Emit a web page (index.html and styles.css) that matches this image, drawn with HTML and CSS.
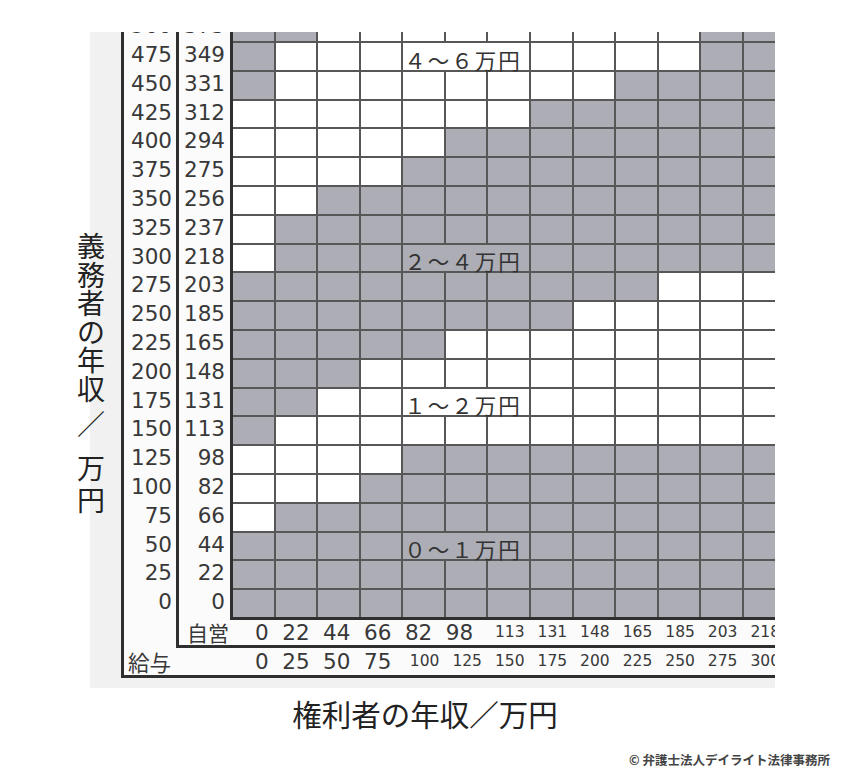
FILE: index.html
```html
<!DOCTYPE html>
<html lang="ja">
<head>
<meta charset="utf-8">
<title>算定表</title>
<link rel="stylesheet" href="styles.css">
</head>
<body>
<div class="page">
  <div class="ylabel"><span class="yl-a">義務者の年収</span><span class="yl-b">／</span><span class="yl-c">万円</span></div>
  <div class="figure">
    <div class="frame">
      <div class="top">
        <div class="lab sal"><span>500</span><span>475</span><span>450</span><span>425</span><span>400</span><span>375</span><span>350</span><span>325</span><span>300</span><span>275</span><span>250</span><span>225</span><span>200</span><span>175</span><span>150</span><span>125</span><span>100</span><span>75</span><span>50</span><span>25</span><span>0</span></div>
        <div class="inner">
          <div class="inner-top">
            <div class="lab se"><span>373</span><span>349</span><span>331</span><span>312</span><span>294</span><span>275</span><span>256</span><span>237</span><span>218</span><span>203</span><span>185</span><span>165</span><span>148</span><span>131</span><span>113</span><span>98</span><span>82</span><span>66</span><span>44</span><span>22</span><span>0</span></div>
            <div class="grid">
<i class="g"></i><i class="g"></i><i></i><i></i><i></i><i></i><i></i><i></i><i></i><i></i><i></i><i class="g"></i><i class="g"></i>
<i class="g"></i><i></i><i></i><i></i><b class="band">４～６万円</b><i></i><i></i><i></i><i></i><i class="g"></i><i class="g"></i>
<i class="g"></i><i></i><i></i><i></i><i></i><i></i><i></i><i></i><i></i><i class="g"></i><i class="g"></i><i class="g"></i><i class="g"></i>
<i></i><i></i><i></i><i></i><i></i><i></i><i></i><i class="g"></i><i class="g"></i><i class="g"></i><i class="g"></i><i class="g"></i><i class="g"></i>
<i></i><i></i><i></i><i></i><i></i><i class="g"></i><i class="g"></i><i class="g"></i><i class="g"></i><i class="g"></i><i class="g"></i><i class="g"></i><i class="g"></i>
<i></i><i></i><i></i><i></i><i class="g"></i><i class="g"></i><i class="g"></i><i class="g"></i><i class="g"></i><i class="g"></i><i class="g"></i><i class="g"></i><i class="g"></i>
<i></i><i></i><i class="g"></i><i class="g"></i><i class="g"></i><i class="g"></i><i class="g"></i><i class="g"></i><i class="g"></i><i class="g"></i><i class="g"></i><i class="g"></i><i class="g"></i>
<i></i><i class="g"></i><i class="g"></i><i class="g"></i><i class="g"></i><i class="g"></i><i class="g"></i><i class="g"></i><i class="g"></i><i class="g"></i><i class="g"></i><i class="g"></i><i class="g"></i>
<i></i><i class="g"></i><i class="g"></i><i class="g"></i><b class="band g">２～４万円</b><i class="g"></i><i class="g"></i><i class="g"></i><i class="g"></i><i class="g"></i><i class="g"></i>
<i class="g"></i><i class="g"></i><i class="g"></i><i class="g"></i><i class="g"></i><i class="g"></i><i class="g"></i><i class="g"></i><i class="g"></i><i class="g"></i><i></i><i></i><i></i>
<i class="g"></i><i class="g"></i><i class="g"></i><i class="g"></i><i class="g"></i><i class="g"></i><i class="g"></i><i class="g"></i><i></i><i></i><i></i><i></i><i></i>
<i class="g"></i><i class="g"></i><i class="g"></i><i class="g"></i><i class="g"></i><i></i><i></i><i></i><i></i><i></i><i></i><i></i><i></i>
<i class="g"></i><i class="g"></i><i class="g"></i><i></i><i></i><i></i><i></i><i></i><i></i><i></i><i></i><i></i><i></i>
<i class="g"></i><i class="g"></i><i></i><i></i><b class="band">１～２万円</b><i></i><i></i><i></i><i></i><i></i><i></i>
<i class="g"></i><i></i><i></i><i></i><i></i><i></i><i></i><i></i><i></i><i></i><i></i><i></i><i></i>
<i></i><i></i><i></i><i></i><i class="g"></i><i class="g"></i><i class="g"></i><i class="g"></i><i class="g"></i><i class="g"></i><i class="g"></i><i class="g"></i><i class="g"></i>
<i></i><i></i><i></i><i class="g"></i><i class="g"></i><i class="g"></i><i class="g"></i><i class="g"></i><i class="g"></i><i class="g"></i><i class="g"></i><i class="g"></i><i class="g"></i>
<i></i><i class="g"></i><i class="g"></i><i class="g"></i><i class="g"></i><i class="g"></i><i class="g"></i><i class="g"></i><i class="g"></i><i class="g"></i><i class="g"></i><i class="g"></i><i class="g"></i>
<i class="g"></i><i class="g"></i><i class="g"></i><i class="g"></i><b class="band g">０～１万円</b><i class="g"></i><i class="g"></i><i class="g"></i><i class="g"></i><i class="g"></i><i class="g"></i>
<i class="g"></i><i class="g"></i><i class="g"></i><i class="g"></i><i class="g"></i><i class="g"></i><i class="g"></i><i class="g"></i><i class="g"></i><i class="g"></i><i class="g"></i><i class="g"></i><i class="g"></i>
<i class="g"></i><i class="g"></i><i class="g"></i><i class="g"></i><i class="g"></i><i class="g"></i><i class="g"></i><i class="g"></i><i class="g"></i><i class="g"></i><i class="g"></i><i class="g"></i><i class="g"></i>
            </div>
          </div>
          <div class="row se-row">
            <span class="rlabel">自営</span>
            <span class="big big6">0 22 44 66 82 98</span>
            <span class="sm">113</span><span class="sm">131</span><span class="sm">148</span><span class="sm">165</span><span class="sm">185</span><span class="sm">203</span><span class="sm">218</span>
          </div>
        </div>
      </div>
      <div class="row sal-row">
        <span class="rlabel">給与</span>
        <span class="big big4">0 25 50 75</span>
        <span class="sm">100</span><span class="sm">125</span><span class="sm">150</span><span class="sm">175</span><span class="sm">200</span><span class="sm">225</span><span class="sm">250</span><span class="sm">275</span><span class="sm">300</span>
      </div>
    </div>
  </div>
  <div class="xlabel">権利者の年収／万円</div>
  <div class="credit">© 弁護士法人デイライト法律事務所</div>
</div>
</body>
</html>
```

FILE: styles.css
```css
* { box-sizing: border-box; }

body {
  margin: 0;
  background: #ffffff;
  color: #383838;
  font-family: "DejaVu Sans", sans-serif;
}

.page {
  position: relative;
  width: 850px;
  height: 779px;
  padding-top: 32px;
  overflow: hidden;
}

/* vertical axis label, laid over the figure's left edge */
.ylabel {
  position: absolute;
  left: 77px;
  top: 231px;
  width: 28px;
  font-family: "Noto Sans CJK JP", sans-serif;
  font-size: 28px;
  color: #222;
  z-index: 2;
}
.yl-a { display: block; line-height: 28.5px; }
.yl-b { display: block; line-height: 36px; margin-top: 3px; }
.yl-c { display: block; line-height: 32px; margin-top: 10px; }

.figure {
  margin-left: 90px;
  width: 685px;
  height: 656px;
  padding-left: 31px;
  background: #f1f1f1;
  overflow: hidden;
}

.frame {
  width: max-content;
  margin-top: -17.8px;
  border-left: 3px solid #2f2f2f;
  border-bottom: 3px solid #2f2f2f;
  background: #fbfbfb;
}

.top { display: flex; }

.lab {
  display: flex;
  flex-direction: column;
  margin-top: -2px;
  flex-shrink: 0;
}
.lab span {
  display: block;
  height: 28.8px;
  line-height: 28.8px;
  font-size: 21.5px;
  text-align: right;
  white-space: nowrap;
}
.sal { width: 52px; padding-right: 4px; }
.se { width: 51px; padding-right: 5px; }

.inner {
  border-left: 3px solid #2f2f2f;
  border-bottom: 3px solid #2f2f2f;
}
.inner-top { display: flex; }

.grid {
  display: grid;
  grid-template-columns: repeat(13, 40.58px);
  grid-auto-rows: 26.8px;
  gap: 2px;
  background: #575757;
  border-left: 3px solid #2f2f2f;
  border-bottom: 3px solid #2f2f2f;
  flex-shrink: 0;
}
.grid i { display: block; background: #ffffff; }
.grid .g { background: #adadb5; }

.band {
  grid-column: span 3;
  display: flex;
  align-items: flex-end;
  padding-left: 1px;
  background: #ffffff;
  font-family: "Noto Sans CJK JP", sans-serif;
  font-weight: 400;
  font-size: 21.5px;
  letter-spacing: 2px;
  line-height: 20px;
  color: #333;
  white-space: nowrap;
}
.band.g { background: #adadb5; }

.row {
  display: flex;
  align-items: center;
  white-space: nowrap;
}
.row > span { flex-shrink: 0; }
.se-row { height: 25px; }
.sal-row { height: 27px; }

.rlabel {
  font-family: "Noto Sans CJK JP", sans-serif;
  font-size: 21px;
  line-height: 1;
}
.se-row .rlabel { width: 54px; text-align: right; padding-right: 4px; }
.sal-row .rlabel { width: 109px; text-align: left; padding-left: 4px; font-size: 21.5px; }

.big {
  font-size: 21.5px;
  word-spacing: 6.7px;
  padding-left: 22px;
  line-height: 1.164;
}
.big6 { width: 255.48px; }
.big4 { width: 170.32px; }

.sm {
  width: 42.58px;
  text-align: center;
  font-size: 15.5px;
  line-height: 1.164;
}

.xlabel {
  margin-top: 9px;
  text-align: center;
  font-family: "Noto Sans CJK JP", sans-serif;
  font-size: 29.5px;
  line-height: 32px;
  color: #222;
}

.credit {
  margin-top: 23px;
  padding-right: 20px;
  text-align: right;
  font-family: "Noto Sans CJK JP", sans-serif;
  font-size: 12.5px;
  font-weight: 700;
  line-height: 16px;
  color: #444;
}
```
